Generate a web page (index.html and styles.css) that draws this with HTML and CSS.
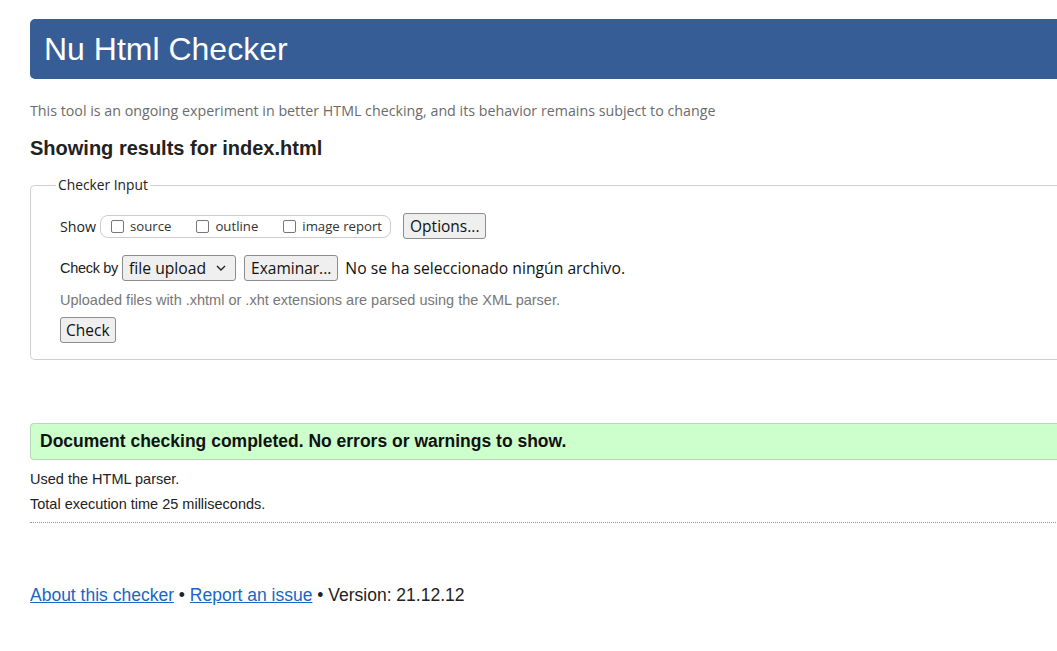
FILE: index.html
```html
<!DOCTYPE html>
<html lang="en">
<head>
<meta charset="utf-8">
<title>Showing results for index.html - Nu Html Checker</title>
<link rel="stylesheet" href="styles.css">
</head>
<body>
<div class="page">
  <h1 class="banner">Nu Html Checker</h1>
  <p class="tagline">This tool is an ongoing experiment in better HTML checking, and its behavior remains subject to change</p>
  <h2 class="results-title">Showing results for index.html</h2>
  <fieldset class="input-box">
    <legend class="input-legend">Checker Input</legend>
    <div class="row show-row">
      <span class="row-label">Show</span>
      <span class="show-group">
        <span class="opt"><span class="cb"></span>source</span>
        <span class="opt"><span class="cb"></span>outline</span>
        <span class="opt"><span class="cb"></span>image report</span>
      </span>
      <span class="btn btn-options">Options...</span>
    </div>
    <div class="row checkby-row">
      <span class="row-label narrow">Check by</span>
      <span class="select">file upload
        <svg class="chev" width="10" height="6" viewBox="0 0 10 6"><path d="M1 1l4 4 4-4" fill="none" stroke="#222" stroke-width="1.4"/></svg>
      </span>
      <span class="btn btn-browse">Examinar...</span>
      <span class="nofile">No se ha seleccionado ningún archivo.</span>
    </div>
    <p class="hint">Uploaded files with .xhtml or .xht extensions are parsed using the XML parser.</p>
    <div class="row check-row">
      <span class="btn btn-check">Check</span>
    </div>
  </fieldset>
  <p class="success">Document checking completed. No errors or warnings to show.</p>
  <p class="info first">Used the HTML parser.</p>
  <p class="info">Total execution time 25 milliseconds.</p>
  <hr class="dots">
  <p class="footer"><a href="#">About this checker</a> • <a href="#">Report an issue</a> • Version: 21.12.12</p>
</div>
</body>
</html>
```

FILE: styles.css
```css
html, body {
  margin: 0;
  padding: 0;
  overflow: hidden;
  background: #fff;
}
body {
  font-family: "Liberation Sans", Arial, sans-serif;
  color: #222;
}
.page {
  width: 1060px;
  padding: 19px 0 0 30px;
  display: flex;
  flex-direction: column;
}
.banner {
  margin: 0;
  height: 60px;
  line-height: 60px;
  padding-left: 14px;
  background: #365d95;
  color: #fff;
  font-weight: normal;
  font-size: 32px;
  border-radius: 5px 0 0 5px;
}
.tagline {
  margin: 22px 0 0;
  font-family: "Open Sans", sans-serif;
  font-size: 14.25px;
  line-height: 20px;
  color: #6b6b6b;
}
.results-title {
  margin: 15px 0 0;
  font-size: 20px;
  line-height: 24px;
  font-weight: bold;
  color: #222;
}
.input-box {
  margin: 15px 0 0;
  padding: 17px 0 16px 29px;
  border: 1px solid #cfcfcf;
  border-right: none;
  border-radius: 5px 0 0 5px;
  min-width: 0;
}
.input-legend {
  font-family: "Open Sans", sans-serif;
  font-size: 13.8px;
  line-height: 20px;
  padding: 0 2px;
  margin-left: -4px;
  color: #222;
}
.row {
  display: flex;
  align-items: center;
}
.row-label {
  font-family: "Open Sans", sans-serif;
  font-size: 14.2px;
  margin-right: 4px;
}
.row-label.narrow {
  font-family: "Liberation Sans", Arial, sans-serif;
  font-size: 14.5px;
  letter-spacing: -0.3px;
}
.show-row {
  height: 28px;
}
.show-group {
  display: flex;
  align-items: center;
  height: 21px;
  padding: 0 8px 0 10px;
  border: 1px solid #cccccc;
  border-radius: 8px;
  font-family: "Open Sans", sans-serif;
  font-size: 13.2px;
  color: #333;
}
.opt {
  display: flex;
  align-items: center;
  margin-right: 25px;
}
.opt:last-child {
  margin-right: 0;
}
.cb {
  width: 13px;
  height: 13px;
  box-sizing: border-box;
  border: 1px solid #777;
  border-radius: 2px;
  margin-right: 6px;
  background: #fff;
}
.btn {
  display: inline-flex;
  align-items: center;
  box-sizing: border-box;
  height: 26px;
  padding: 0 6px;
  background: #efefef;
  border: 1px solid #8c8c8c;
  border-radius: 3px;
  font-family: "Open Sans", sans-serif;
  font-size: 15.5px;
  color: #111;
}
.btn-options {
  margin-left: 12px;
}
.checkby-row {
  margin-top: 15px;
  height: 26px;
}
.select {
  display: inline-flex;
  align-items: center;
  box-sizing: border-box;
  height: 26px;
  width: 114px;
  padding: 0 0 0 6px;
  border: 1px solid #8c8c8c;
  border-radius: 3px;
  background: #efefef;
  font-family: "Open Sans", sans-serif;
  font-size: 15.7px;
  color: #111;
}
.chev {
  margin-left: auto;
  margin-right: 9px;
}
.btn-browse {
  margin-left: 8px;
}
.nofile {
  margin-left: 7px;
  font-family: "Open Sans", sans-serif;
  font-size: 15.7px;
  color: #111;
}
.hint {
  margin: 9px 0 0;
  font-size: 14.5px;
  line-height: 20px;
  color: #777;
}
.check-row {
  margin-top: 7px;
}
.btn-check {
  height: 26px;
  padding: 0 5px;
}
.success {
  margin: 63px 0 0;
  height: 37px;
  box-sizing: border-box;
  line-height: 35px;
  padding-left: 9px;
  background: #ccffcc;
  border: 1px solid #b9d6b9;
  border-right: none;
  border-radius: 4px 0 0 4px;
  font-weight: bold;
  font-size: 17.5px;
  color: #111;
}
.info {
  margin: 5px 0 0;
  font-size: 14.5px;
  line-height: 20px;
  color: #222;
}
.info.first {
  margin-top: 9px;
}
.dots {
  margin: 8px 0 0;
  border: none;
  border-top: 1px dotted #999;
  height: 0;
}
.footer {
  margin: 61px 0 0;
  font-size: 17.5px;
  line-height: 22px;
  color: #222;
}
.footer a {
  color: #1a66c2;
  text-decoration: underline;
}
```
